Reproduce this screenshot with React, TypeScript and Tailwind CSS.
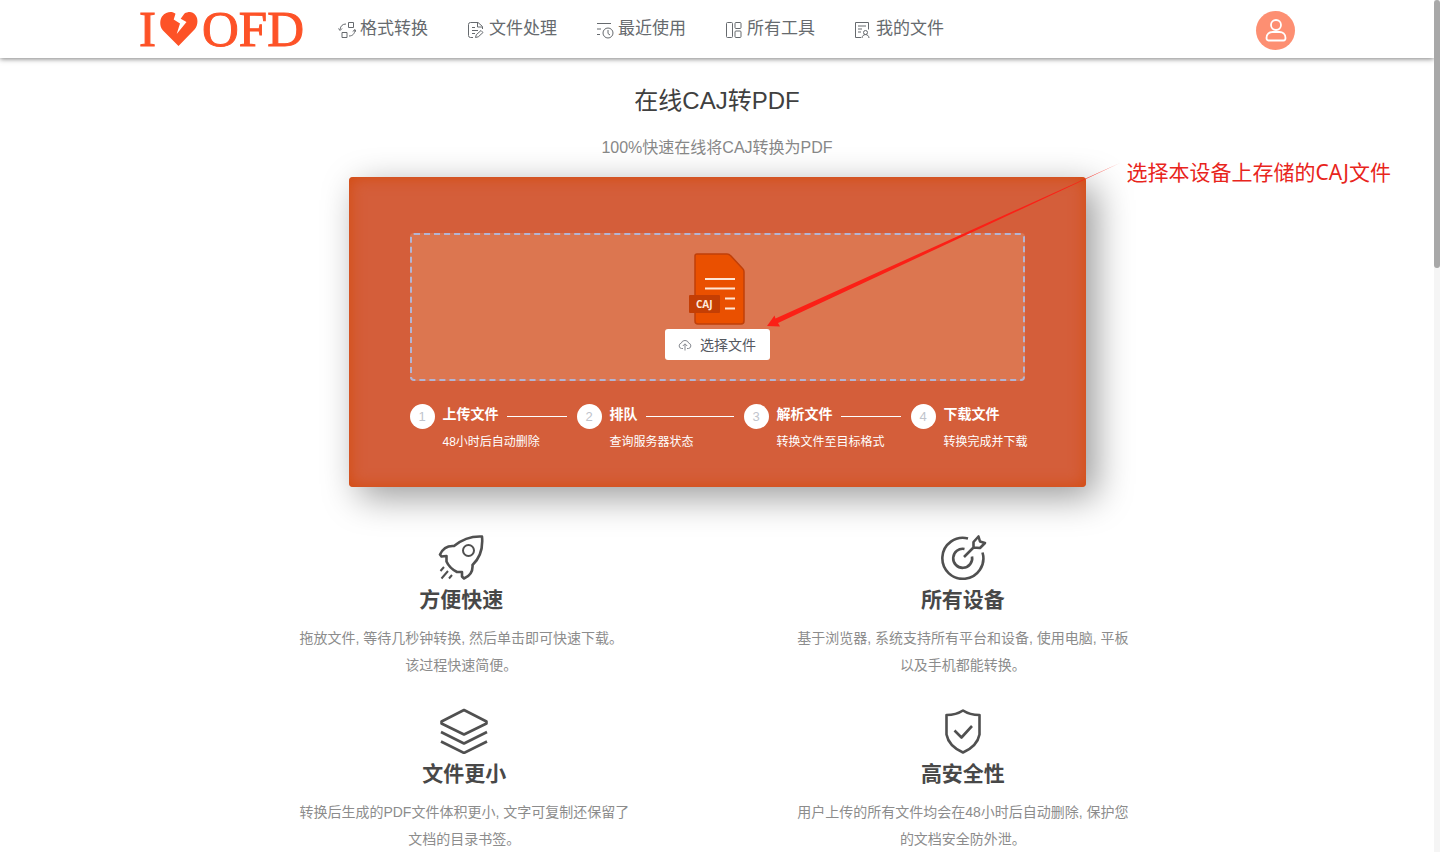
import React from "react";

type TStep = {
  title: string;
  desc: string;
};

type TFeature = {
  title: string;
  lines: string[];
  icon: React.ReactNode;
};

const navs = [
  {
    title: "格式转换",
    icon: (
      <>
        <rect x="10.500" y="1.500" width="5" height="5" />
        <rect x="4" y="11.500" width="5" height="5" />
        <path d="M8 3C4.500 3 2.500 5 2 8.500M.5 7.500 2 9.500 4 7.500M11 15c3.500 0 5.500-2 6-6M14.700 10.500 17 8.500l1 2.500" />
      </>
    ),
  },
  {
    title: "文件处理",
    icon: (
      <>
        <path d="M6 16.500H3.500a2 2 0 0 1-2-2v-11a2 2 0 0 1 2-2H11l4.500 4V8M10.500 1.500V6H15M5 6.500h3M5 9.500h6M5 12.500h3" />
        <path d="m8.500 16.500.8-2.800 4.700-4.200 2 2-4.700 4.300z" />
      </>
    ),
  },
  {
    title: "最近使用",
    icon: (
      <>
        <path d="M1 2.500h14M1 8h4M1 13.500h3" />
        <circle cx="12" cy="12" r="5" />
        <path d="M12 9v3.500l2 1.500" />
      </>
    ),
  },
  {
    title: "所有工具",
    icon: (
      <>
        <rect x="1.500" y="1.500" width="6" height="15" rx="1" />
        <rect x="10" y="1.500" width="6" height="6" rx="1" />
        <rect x="10" y="10" width="6" height="6.500" rx="1" />
      </>
    ),
  },
  {
    title: "我的文件",
    icon: (
      <>
        <path d="M7 16.500H1.500v-15h13v7M4 5h8M4 8h4M4 11h3" />
        <circle cx="11.500" cy="11.500" r="2" />
        <path d="M8 17c.2-2 1.300-3.400 3.500-3.400S14.800 15 15 17" />
      </>
    ),
  },
];

const steps: TStep[] = [
  { title: "上传文件", desc: "48小时后自动删除" },
  { title: "排队", desc: "查询服务器状态" },
  { title: "解析文件", desc: "转换文件至目标格式" },
  { title: "下载文件", desc: "转换完成并下载" },
];

const features: TFeature[] = [
  {
    title: "方便快速",
    lines: ["拖放文件, 等待几秒钟转换, 然后单击即可快速下载。", "该过程快速简便。"],
    icon: (
      <>
        <path d="M45 2.500C35 2 26 4.500 17 12C11 11.500 6 14 3 20.500l1.500 2 5-.5v5.500c2 4.500 5.500 8 10.500 10.500h5v4.500l2 2C33 42 36 37 35.500 31 43.500 23.500 46 13 45 2.500Z" />
        <circle cx="31.500" cy="16.500" r="5.500" strokeWidth="2" />
        <path d="m7 33-3.500 4M11 37l-6.500 7.500M15 41l-3 3.500" strokeWidth="2" />
      </>
    ),
  },
  {
    title: "所有设备",
    lines: ["基于浏览器, 系统支持所有平台和设备, 使用电脑, 平板", "以及手机都能转换。"],
    icon: (
      <>
        <path d="M29 4.500A20.500 20.500 0 1 0 43.500 18.500" />
        <path d="M25.500 15A9.500 9.500 0 1 0 33 22.500" />
        <path d="m25 23 9.500-9.500M34.500 13.500V8l5-5.500 1.500 5 5 1.500-5 5z" />
      </>
    ),
  },
  {
    title: "文件更小",
    lines: ["转换后生成的PDF文件体积更小, 文字可复制还保留了", "文档的目录书签。"],
    icon: (
      <path d="M24 2 46.500 13.500v2L24 26.500 1.500 15.500v-2ZM1 24l23 11.500L47 24M1 33.500l23 11.500 23-11.500" />
    ),
  },
  {
    title: "高安全性",
    lines: ["用户上传的所有文件均会在48小时后自动删除, 保护您", "的文档安全防外泄。"],
    icon: (
      <>
        <path d="M24 2.500c4.500 3 10 4.500 16.500 4.500v19.500C39 34.500 33 40.500 24 44.500 15 40.500 9 34.500 7.500 26.500V7C14 7 19.500 5.500 24 2.500Z" />
        <path d="m15.500 22.500 7 7L33 18" />
      </>
    ),
  },
];

function Header() {
  return (
    <header className="relative flex h-[58px] shrink-0 items-center bg-white px-[139px] shadow-[0_1px_5px_rgba(0,0,0,0.5)]">
      <a
        href="#"
        aria-label="I love OFD"
        className="flex items-center font-['Liberation_Serif',serif] text-[51px] leading-none text-[#fd5227] [-webkit-text-stroke:1px_#fd5227]"
      >
        <span>I</span>
        <svg viewBox="0 0 38 34" className="mx-1 h-[34px] w-[38px]" fill="currentColor">
          <path d="M18.500 34 3 18.500C-1 14 0 7.500 2 4.500 4.500 1 8 0 10.500 0c2 0 3.500.6 5 1.700L13.700 7.400l6.300 4L16.700 22 26.500 10l-5.800-3.300L24.500 1.500C26 .5 28 0 30 0c3 .4 6 2.500 7 6 1 4 .3 8-2.500 11.500Z" />
        </svg>
        <span>OFD</span>
      </a>
      <nav className="ml-[34px] flex items-center gap-[39px]">
        {navs.map((nav) => (
          <a key={nav.title} href="#" className="flex items-center gap-1 text-[17px] leading-6 text-[#666a6e]">
            <svg
              viewBox="0 0 18 18"
              className="mt-0.5 size-[18px]"
              fill="none"
              stroke="currentColor"
              strokeWidth="1"
              strokeLinejoin="round"
            >
              {nav.icon}
            </svg>
            {nav.title}
          </a>
        ))}
      </nav>
      <button
        type="button"
        aria-label="user"
        className="mt-0.5 ml-auto flex size-[39px] items-center justify-center rounded-full bg-[#fd8f72] text-white"
      >
        <svg viewBox="0 0 22 24" className="h-6 w-[22px]" fill="none" stroke="currentColor" strokeWidth="1.800">
          <circle cx="11" cy="7" r="5" />
          <path d="M1.500 20c0-4 3-6 6-6h7c3 0 6 2 6 6 0 1.500-.5 2.500-2 2.500h-15c-1.500 0-2-1-2-2.500Z" />
        </svg>
      </button>
    </header>
  );
}

function FileIcon() {
  return (
    <svg viewBox="0 0 58 72" className="ml-0.5 h-[72px] w-[58px]">
      <path d="M8 1h30c2 0 3 1 4 2l12 13c1 1 1 2 1 3v49a3 3 0 0 1-3 3H9a3 3 0 0 1-3-3V3a2 2 0 0 1 2-2Z" fill="#ea5000" stroke="#c03f08" strokeWidth="1.500" />
      <path d="M16 26h30M16 35.500h30M36 45.500h10M36 55.500h10" stroke="#ffe6d5" strokeWidth="2.200" />
      <rect x="0" y="42" width="31" height="18" rx="1" fill="#c43e04" />
      <text x="7" y="55" fontFamily="'Open Sans', sans-serif" fontSize="10" fontWeight="700" fill="#ffe9dc">
        CAJ
      </text>
    </svg>
  );
}

function Steps() {
  return (
    <ol className="mt-[22px] -mr-[3px] flex text-white">
      {steps.map((step, i) => (
        <li key={step.title} className="flex flex-1 gap-2 last:flex-none">
          <span className="mt-px flex size-[25px] shrink-0 items-center justify-center rounded-full bg-white text-[13px] text-[#c0c4cc]">
            {i + 1}
          </span>
          <div className="flex-1 whitespace-nowrap">
            <div className="flex items-center">
              <h3 className="text-sm leading-[22px] font-bold">{step.title}</h3>
              {i < steps.length - 1 && <span className="mt-1 mr-2.5 ml-2 h-px flex-1 bg-white" />}
            </div>
            <p className="mt-[7px] text-xs leading-5">{step.desc}</p>
          </div>
        </li>
      ))}
    </ol>
  );
}

function Converter() {
  return (
    <section className="relative mx-auto mt-[17px] h-[310px] w-[737px] rounded bg-[#d45e3a] px-[61px] pt-14 shadow-[10px_10px_36px_rgba(0,0,0,0.4),inset_0_0_16px_#d44a0c]">
      <div className="flex h-[148px] flex-col items-center rounded border-2 border-dashed border-[#b3b4d2] bg-[#dc7650] pt-[18px]">
        <FileIcon />
        <button
          type="button"
          className="mt-1 flex h-[31px] w-[105px] items-center justify-center gap-2 rounded-[3px] bg-white text-sm text-[#55585f]"
        >
          <svg viewBox="0 0 14 14" className="size-3.5 text-[#85888f]" fill="none" stroke="currentColor" strokeWidth="1">
            <path d="M5 10.500H3.500a2.700 2.700 0 0 1-.3-5.300 4 4 0 0 1 7.600 0 2.700 2.700 0 0 1-.3 5.300H9M7 12.500V6M4.800 8 7 5.800 9.200 8" />
          </svg>
          选择文件
        </button>
      </div>
      <Steps />

      {/* hint arrow pointing to the upload button */}
      <svg viewBox="0 0 354 164" className="pointer-events-none absolute -top-3.5 left-[418px] h-[164px] w-[354px]">
        <path d="M0 163 7.500 152.500 8.500 155.500 353 0 11 160 13 163.500Z" fill="#fb2016" />
      </svg>
      <p className="absolute -top-[21px] left-[778px] font-['Noto_Sans','Noto_Sans_CJK_SC',sans-serif] text-[21px] leading-8 whitespace-nowrap text-[#e8251c]">
        选择本设备上存储的CAJ文件
      </p>
    </section>
  );
}

function Features() {
  return (
    <section className="mt-[47px] grid grid-cols-[auto_auto] justify-center gap-x-[168px] gap-y-[29px] pr-1.5">
      {features.map((item) => (
        <div key={item.title} className="flex w-fit flex-col items-center text-center">
          <svg
            viewBox="0 0 48 46"
            className="h-[46px] w-12 text-[#505050]"
            fill="none"
            stroke="currentColor"
            strokeWidth="2.600"
            strokeLinejoin="round"
          >
            {item.icon}
          </svg>
          <h2 className="mt-1.5 text-[21px] leading-7 font-bold text-[#484848]">{item.title}</h2>
          <p className="mt-[11px] text-sm leading-[27px] whitespace-nowrap text-[#8c8c8c]">
            {item.lines[0]}
            <br />
            {item.lines[1]}
          </p>
        </div>
      ))}
    </section>
  );
}

function App() {
  return (
    <div className="flex h-screen overflow-hidden bg-white font-['Liberation_Sans','Noto_Sans_CJK_SC',sans-serif]">
      <div className="flex-1 overflow-hidden">
        <Header />
        <main>
          <h1 className="mt-[25px] text-center text-2xl leading-9 text-[#404040]">在线CAJ转PDF</h1>
          <p className="mt-[17px] text-center text-base leading-6 text-[#888888]">100%快速在线将CAJ转换为PDF</p>
          <Converter />
          <Features />
        </main>
      </div>
      <div className="w-1.5 shrink-0 bg-[#f5f5f5]">
        <div className="h-[268px] rounded-full bg-[#a8a8a8]" />
      </div>
    </div>
  );
}

export default App;
